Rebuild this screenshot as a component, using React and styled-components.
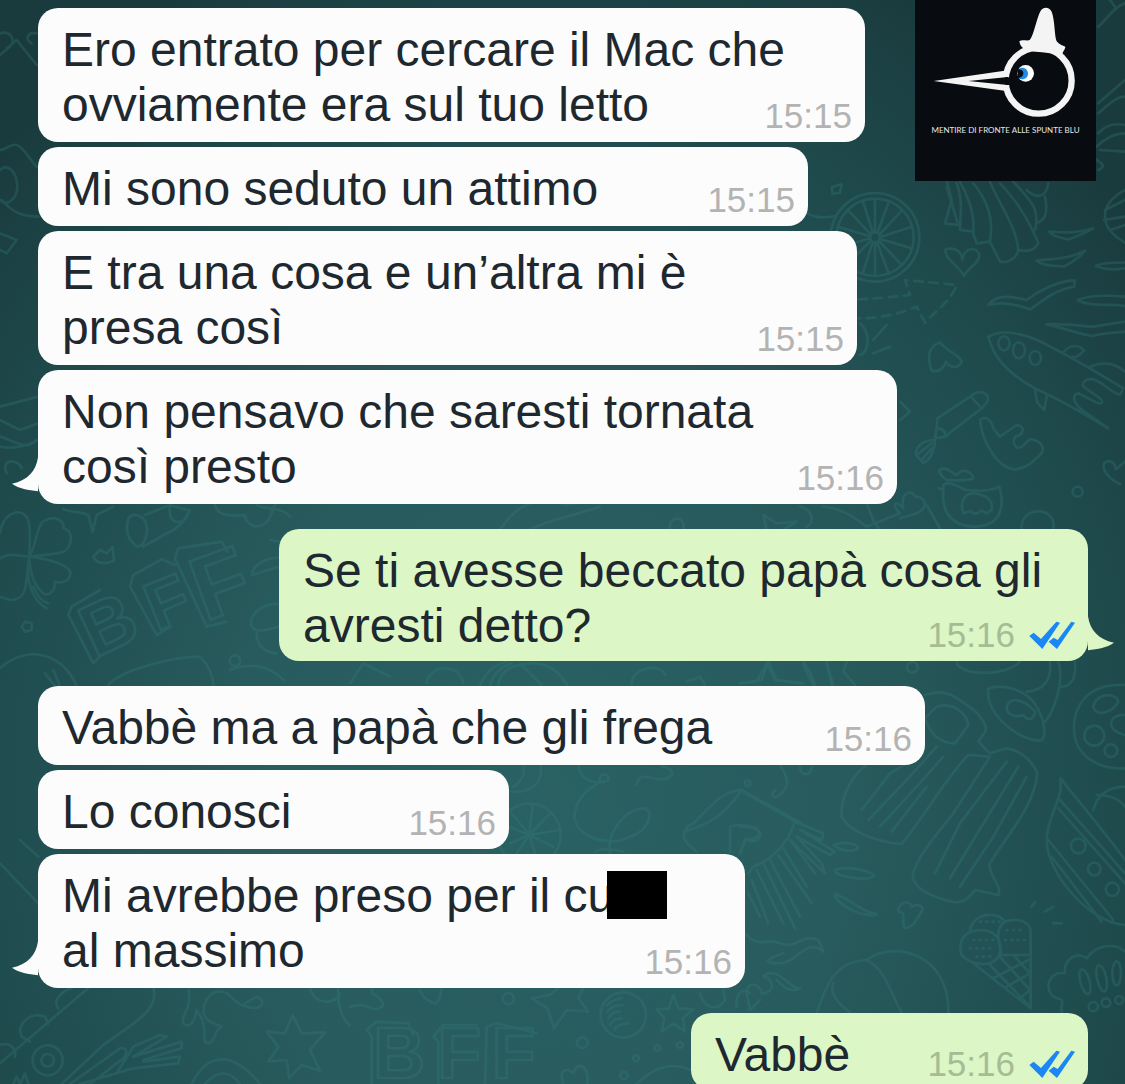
import styled, { createGlobalStyle, css } from 'styled-components'

const thread = [
    {
        id: 1,
        messages: [
            { lines: ['Ero entrato per cercare il Mac che', 'ovviamente era sul tuo letto'], time: '15:15', width: 827 },
            { lines: ['Mi sono seduto un attimo'], time: '15:15', width: 770 },
            { lines: ['E tra una cosa e un’altra mi è', 'presa così'], time: '15:15', width: 819 },
            { lines: ['Non pensavo che saresti tornata', 'così presto'], time: '15:16', width: 859, tail: true },
        ],
    },
    {
        id: 2,
        sent: true,
        messages: [
            { lines: ['Se ti avesse beccato papà cosa gli', 'avresti detto?'], time: '15:16', width: 809, tail: true },
        ],
    },
    {
        id: 3,
        messages: [
            { lines: ['Vabbè ma a papà che gli frega'], time: '15:16', width: 887 },
            { lines: ['Lo conosci'], time: '15:16', width: 471 },
            { lines: ['Mi avrebbe preso per il cu', 'al massimo'], censored: 0, time: '15:16', width: 707, tail: true },
        ],
    },
    {
        id: 4,
        sent: true,
        messages: [
            { lines: ['Vabbè'], time: '15:16', width: 397 },
        ],
    },
]

const Doodles = () => (
    <Wallpaper viewBox='0 0 1125 1084' preserveAspectRatio='xMinYMin slice' aria-hidden='true'>
        {/* wheel, wing, hearts, rocket */}
        <g transform='translate(800 180) scale(.3333)'>
            <circle cx='225' cy='172' r='133' />
            <circle cx='225' cy='172' r='116' />
            <circle cx='225' cy='172' r='15' />
            <path d='M225 154V60M233 156L266 66M240 162L305 92M243 170L335 140M243 178L335 205M240 186L305 255M232 190L266 280M225 192V286M217 190L188 280M210 184L145 250M207 176L114 202M207 168L114 140M210 160L145 92M218 156L188 62' />
            <path d='M22 100C50 115 75 115 105 108M95 22L125 12L120 38L98 42Z' />
            <path d='M440 0L455 60L435 130L475 135L440 20M470 10C490 60 480 110 480 150L520 155C525 100 500 40 480 5M520 10C570 70 580 130 570 185L530 190L518 155M570 185L600 245C625 250 650 235 655 210C650 140 590 60 570 5M600 10C660 70 700 150 715 190C700 215 680 215 655 210M640 5C700 70 720 90 705 150M680 30C710 60 740 50 745 10M735 50C745 100 735 120 710 130' />
            <path d='M492 288C480 260 430 235 437 208C465 200 485 215 487 238C495 200 530 200 538 225C540 250 500 265 492 288Z' />
            <path d='M395 572C380 530 385 500 420 487C440 515 475 520 486 545C475 568 450 565 438 545C430 565 418 578 395 572Z' />
            <path strokeDasharray='26 20' d='M175 358C240 355 280 350 330 345L315 300C370 305 420 310 470 315C455 360 400 400 375 428L350 380C290 405 230 415 175 415' />
            <path d='M748 155C780 155 810 165 880 145C850 160 825 175 800 178C780 170 760 172 748 155ZM710 242C760 235 800 240 855 212C840 232 810 250 792 260C760 255 730 260 710 242ZM888 258C910 245 940 250 975 247M888 258C920 272 950 268 975 265M565 375C590 340 640 350 680 360C720 330 780 300 825 302L822 320C760 330 720 370 690 388C640 370 600 365 565 375ZM975 350C920 345 870 345 833 360C870 382 930 370 975 378M740 433C800 430 850 440 880 440L975 425M740 433C800 445 840 465 880 468C920 455 950 460 975 455M975 30C900 70 890 140 975 188M975 60L915 90M975 110L912 120M975 135L930 150' />
            <path d='M565 470C620 440 700 470 760 505C840 545 910 590 970 625L960 645C930 635 905 605 880 598C860 595 845 605 850 620L900 655C912 665 905 675 890 668L835 640C815 645 820 665 840 685L925 745C850 700 760 650 710 628C620 580 580 530 565 470ZM790 518C810 490 840 495 852 512C840 525 825 535 820 530M870 560C920 540 950 555 975 575M705 630L712 668L733 690L740 650' />
            <ellipse cx='612' cy='490' rx='17' ry='21' /><ellipse cx='657' cy='511' rx='18' ry='24' /><ellipse cx='706' cy='534' rx='17' ry='21' />
            <path d='M410 745L412 715L525 640C550 630 570 645 562 665L545 685L435 770L405 775ZM512 650L545 685M410 745C430 745 440 758 435 770M405 780C370 780 345 800 348 825L370 850C395 835 405 805 405 780ZM350 825L395 790M365 840L400 800' />
            <path d='M540 720C555 705 575 720 580 745L600 770L650 735C680 740 670 765 645 770C635 795 650 810 665 800L690 778C720 780 735 800 725 820C700 845 680 865 645 868C590 865 545 780 540 720Z' />
            <path d='M418 870C440 855 460 885 470 885C490 860 520 880 520 895C500 905 460 900 440 900C425 890 418 880 418 870ZM415 925L430 930L430 915C450 900 480 925 500 930C540 935 570 935 598 920C615 980 605 1040 520 1040C440 1035 425 980 430 930M490 1000C480 970 490 940 520 940C560 945 580 960 575 990L560 1000L545 992L528 1002L510 994L490 1000' />
            <path d='M960 912C930 900 905 870 912 850C930 835 945 850 948 868L975 845' />
            <circle cx='833' cy='935' r='15' />
            <path d='M665 1045C660 980 770 975 760 1045M0 980C40 990 45 1030 20 1040M70 980C150 990 180 1030 200 1040L300 1000C270 970 290 960 310 985C300 930 340 930 345 950C380 950 385 985 350 1000L300 1015M300 665L330 695L300 720M180 430C215 460 205 520 180 525M220 480L260 435M220 520L270 500' />
        </g>
        {/* clover, candy, lettering */}
        <g transform='translate(0 440) scale(.3333)'>
            <path d='M88 350C90 280 100 210 45 218C20 225 5 245 0 280M88 350C110 320 110 240 140 240C165 225 195 245 190 265C225 275 215 325 190 335C160 345 120 345 88 350ZM88 350C60 350 30 335 0 355M88 350C75 420 90 480 30 480L0 470M88 350C140 355 210 375 212 400C205 430 180 430 165 425C165 455 145 470 130 460C105 440 90 400 88 350ZM88 350C75 420 95 480 140 505M100 440C115 470 120 480 145 490' />
            <path d='M190 208C220 220 250 215 265 225L278 275L290 225L340 200M385 235C400 215 435 225 440 260C445 290 430 320 410 320C385 300 375 270 385 235ZM435 225L510 195L570 212C550 250 530 270 500 280L430 320M510 195C505 240 520 250 550 245M645 195C650 225 690 230 735 225C740 270 800 270 812 225L825 195M280 350L300 330L320 340L338 320L342 362C310 375 290 370 280 350ZM65 560L75 545L95 550V570L75 575Z' />
            <circle cx='705' cy='662' r='16' />
            <path d='M0 685C80 610 190 640 230 738M135 700L165 738M160 690L180 738M325 735C360 690 520 650 600 650C630 680 640 710 640 738M755 405C760 375 790 355 838 352M755 405L838 380M838 492C780 490 745 530 755 560C770 580 800 570 838 560M770 580C770 620 800 640 830 640M812 300L838 305M0 20C50 30 100 10 110 0M20 100C0 50 60 60 65 85' />
            <g fontFamily='Liberation Sans, Arial, sans-serif' fontWeight='700'>
                <text transform='translate(285 655) rotate(-25)' fontSize='220'>B</text>
                <text transform='translate(470 575) rotate(-22)' fontSize='205'>F</text>
                <text transform='translate(615 545) rotate(-20)' fontSize='270'>F</text>
            </g>
            <path d='M215 500L205 525L280 670L300 650M215 500L300 450M400 405L390 440L470 585L512 560M400 405L485 358L525 375M535 325L525 355L620 560L680 545M535 325L665 305L682 335' />
        </g>
        {/* fries, popsicles, cake, ice cream */}
        <g transform='translate(740 640) scale(.3333)'>
            <path d='M0 130L50 125L80 70L105 120L185 130M190 65L210 95L225 135M260 65L275 135M320 65L310 95L345 135M650 65C655 110 800 110 840 65M745 145C790 130 850 150 880 185C920 240 920 300 900 302C830 300 735 220 745 145ZM800 200C810 170 850 175 885 215C880 245 860 240 850 225C820 235 800 220 800 200M860 155C920 150 935 110 930 65M955 65C975 120 940 220 915 245M1005 65C1010 120 990 140 965 140' />
            <circle cx='517' cy='82' r='16' />
            <path d='M1155 135C1040 130 995 200 1003 280C1010 350 1080 390 1155 385M1060 200C1065 160 1130 155 1135 185C1120 215 1070 235 1060 200ZM1155 225C1110 220 1090 270 1155 285' />
            <circle cx='1063' cy='287' r='30' /><circle cx='1113' cy='332' r='19' />
            <path d='M555 165C610 145 640 165 680 195C720 220 745 260 735 275L715 305L750 340L800 325C840 330 880 365 892 400C885 500 790 600 750 670C740 700 790 740 775 765L705 750C670 800 640 790 600 775C550 760 510 730 520 695C540 640 600 570 640 520L750 350L685 345C620 410 560 520 485 612C430 610 330 580 305 530C300 470 340 400 380 375M555 235L590 200C640 185 680 220 685 255L645 310C600 310 570 280 555 235ZM365 510L450 400L550 340M385 540L500 420L590 320M420 560L530 440L610 350M455 575L560 440M585 700L660 550L800 365M630 715L700 600L835 380M660 740L760 590L860 410' />
            <path d='M0 450L165 545M0 560C40 560 65 570 60 590C45 615 20 600 18 595L0 640M165 545C140 620 90 660 40 680L25 700M165 545L250 580L245 600L180 570M180 570L285 635L270 645L170 590M170 590L245 670L255 700L150 600M150 600L225 700M130 625L200 740M115 645L215 790M90 660L180 830M70 670L165 865M50 690L130 850M35 720L85 850M25 760L60 830M105 450C85 470 105 480 125 460C145 440 150 420 120 375M180 380C180 410 215 410 215 380' />
            <path d='M280 615C320 600 355 615 355 625C330 640 300 630 280 615ZM285 690C320 675 400 695 402 708C380 725 280 710 285 690ZM285 762C330 775 370 820 410 822C390 840 290 800 285 762ZM495 865C480 845 505 820 475 815C470 790 510 775 515 800C535 790 555 800 545 815C530 835 525 860 495 865Z' />
            <path d='M962 415C1020 490 1090 570 1155 660M962 450C950 500 920 550 920 600C920 700 1050 850 1155 855M960 480L1155 700M955 505L1155 730M925 600L1120 840M935 650L1085 845M962 415L962 450M1155 440C1100 440 1070 470 1060 510M1070 465C1110 465 1140 480 1155 500' />
            <circle cx='1015' cy='618' r='22' /><circle cx='1063' cy='687' r='19' /><circle cx='1117' cy='748' r='20' />
            <path d='M665 945C650 900 680 870 720 870C780 870 790 920 775 950C755 985 690 975 665 945ZM690 870C700 820 770 810 795 845C840 830 875 850 872 880L872 1105L700 970M795 845C760 870 780 920 785 945L865 945M780 950L870 1050M750 975L870 1100M820 945L870 1000M865 960L760 1015M870 1000L800 1040M870 1050L840 1075' />
            <path strokeDasharray='3 16' d='M700 900H760M690 925H765M710 950H760M800 870H855M795 900H860M720 845H780' />
            <path d='M230 1118C270 1000 300 965 380 960C460 900 630 940 625 1118M380 960C440 990 450 1060 485 1118M280 1030C265 1070 310 1100 330 1118M875 800L885 785M915 815L940 800M940 850H965M965 1118C960 1090 980 1080 950 1075C910 1060 920 990 975 1000C970 950 1020 935 1040 955C1070 910 1130 910 1155 935' />
            <ellipse cx='1035' cy='1025' rx='14' ry='38' transform='rotate(-15 1035 1025)' /><ellipse cx='1085' cy='1015' rx='14' ry='40' transform='rotate(-12 1085 1015)' /><ellipse cx='1130' cy='1000' rx='13' ry='36' />
            <circle cx='1060' cy='1100' r='14' /><circle cx='1098' cy='1088' r='13' /><circle cx='1138' cy='1080' r='12' />
            <path d='M15 880C60 930 80 890 120 910C170 930 180 880 235 900L250 935C200 890 170 970 120 970C70 970 70 960 130 940M20 1060C20 1020 60 1030 65 1060C110 1060 100 1010 70 1010C110 970 150 1050 180 1045C150 1060 130 1040 110 1020M20 1060L30 1110L60 1080' />
        </g>
        {/* skateboard, rocket, star */}
        <g transform='translate(0 840) scale(.3333)'>
            <path d='M265 444L0 670M175 505C155 480 190 450 215 445M65 590C50 555 80 530 110 525L135 530L145 552M65 590L90 605M0 615C30 605 50 625 45 650M185 732L310 615C400 550 480 510 460 444M210 732L360 625C380 620 385 640 370 655L270 732M350 700L400 620L480 585L500 590L400 650M400 650L545 605V625L430 660M430 665L540 650L535 670L400 685L240 732M40 732L50 710L60 732L75 700L85 732M565 450C580 500 540 530 550 550C570 570 585 540 590 510C630 560 600 600 620 610C650 610 640 570 665 560L630 545C590 520 620 460 650 455C700 450 690 490 740 500C790 515 800 480 770 470L735 490M575 732C610 660 680 610 780 732M615 732C650 690 690 690 720 732M930 444C940 490 1000 500 1020 460M1015 444C1010 500 1030 540 1050 555M0 70L115 190M60 0L115 50' />
            <circle cx='143' cy='661' r='45' /><circle cx='143' cy='661' r='19' />
            <path d='M878 525L905 580L975 577L930 630L960 692L905 675L868 715L860 660L805 665L835 620L800 575L855 580Z' />
        </g>
        {/* lettering, stars, moon */}
        <g transform='translate(350 760) scale(.3333)'>
            <path d='M0 740C60 720 70 770 100 735C90 700 60 710 65 684M210 690C220 720 250 730 258 730C275 715 270 700 275 684M545 715L600 705L625 684M545 715L592 745L612 805L650 750L715 755L685 715L700 684M970 705L985 745L1030 748L998 775L1005 815L970 790L935 815L943 775L920 748L957 745ZM1050 700C1060 740 1100 760 1125 720L1120 690M1160 740C1155 700 1180 680 1200 700M640 972C625 930 650 920 670 940C680 900 720 915 712 972M860 972C920 910 980 910 1020 930' />
            <circle cx='475' cy='716' r='17' /><circle cx='820' cy='765' r='68' /><circle cx='697' cy='848' r='16' /><circle cx='923' cy='864' r='9' /><circle cx='990' cy='855' r='9' /><circle cx='858' cy='895' r='9' /><circle cx='822' cy='947' r='11' />
            <path d='M815 715C790 720 780 725 772 735M820 735C790 735 780 745 772 755M810 755C790 755 780 765 775 775M815 775C795 775 785 785 780 795M835 790C810 790 795 800 795 810' />
            <g fontFamily='Liberation Sans, Arial, sans-serif' fontWeight='700' fontSize='215'>
                <text x='70' y='955'>B</text>
                <text x='262' y='955'>F</text>
                <text x='425' y='955'>F</text>
            </g>
            <path d='M50 810L80 785L175 790L190 825M50 810L65 830V972M250 830L280 795H380M250 830L265 845V972M410 800L440 790L560 820M410 800L405 972' />
        </g>
        {/* swirls, lime slice, envelope */}
        <g transform='translate(480 640) scale(.3333)'>
            <path d='M0 135C20 95 40 75 80 65M30 135C40 105 60 80 95 70M55 135C60 80 130 60 195 75C235 90 250 120 262 135M125 75L185 135M455 135C450 85 540 65 555 105M620 125L660 110L675 135M780 130L845 120L865 65L890 120L968 130M970 75L1000 135M1040 70L1060 135M95 455C150 460 190 430 182 378M100 440C130 420 135 400 130 378' />
            <circle cx='148' cy='585' r='94' />
            <path d='M148 585L158 495M148 585L210 520M148 585L240 570M148 585L220 620M148 585L165 640M148 585L110 640M148 585L90 610M148 585L88 560M148 585L95 520' />
            <path d='M295 378C300 420 350 440 385 420C390 395 355 400 360 420C355 440 290 450 283 530C290 600 400 620 450 590C500 580 530 510 490 505C430 510 380 580 390 640M470 435C480 390 510 420 550 418C590 410 580 385 545 378M650 635C600 600 600 570 640 550C690 500 730 450 785 450L965 550M615 575C690 550 730 530 785 450M750 560C790 550 840 560 838 580C830 600 800 600 795 600L780 640M750 560V635M345 635C370 620 410 630 430 635' />
            <circle cx='803' cy='430' r='8' />
        </g>
        {/* left and right margins */}
        <g transform='scale(.3333)'>
            <path d='M0 100C30 90 50 120 30 140L0 165M20 145L50 120L110 195M110 100C80 95 75 120 95 130M0 450C20 450 30 430 50 435C70 440 90 480 110 500M0 510C20 490 50 510 52 560C50 600 20 620 0 600M5 600C40 640 70 650 115 650M0 700L50 720L20 760L0 750M0 1260L60 1290L115 1270M0 1310C60 1330 80 1350 110 1320M0 1220L115 1190' />
            <path transform='translate(3000 0)' d='M375 10C340 20 320 60 295 80M330 0L345 20M295 310L375 240M295 340C330 310 350 290 375 290M295 400C320 370 350 370 375 375M290 440C320 410 350 400 375 400M290 480C320 500 310 500 295 510M300 450L375 455' />
            <path d='M770 1515C790 1530 850 1520 870 1550M1500 1590C1560 1500 1620 1490 1700 1515L1790 1500M1590 1590C1640 1560 1700 1555 1800 1520M2010 1590C2000 1550 2060 1540 2050 1590M2300 1590L2290 1545L2330 1570L2390 1565L2350 1590M2600 1510L2620 1560L2640 1590M2780 1515L2820 1585M690 2010C740 1990 800 1990 850 2040M1050 2050L1090 1990L1170 2030M1280 2050C1290 1990 1380 1990 1390 2050' />
        </g>
    </Wallpaper>
)

const Ticks = () => (
    <TicksIcon viewBox='388 92 138 84' role='img' aria-label='Letto'>
        <path d='M389 137L402 127L424 146L470 94L481 97L428 176Z' />
        <path d='M447 154L462 142L474 149L515 94L526 97L472 176Z' />
    </TicksIcon>
)

const Badge = () => (
    <BadgeBox>
        <svg viewBox='30 0 543 360' aria-hidden='true'>
            <circle cx='401' cy='242' r='99' fill='#080c10' stroke='#f4f4f4' strokeWidth='19' />
            <path d='M309 211L86 243L309 274Z' fill='#f4f4f4' />
            <path d='M309 231L190 243L309 255Z' fill='#080c10' />
            <path d='M300 232H320V255H302Z' fill='#080c10' />
            <path d='M343 124C352 117 366 124 374 120C387 106 394 55 407 32C415 20 433 20 440 35C450 60 448 108 455 124C462 134 473 137 481 140C480 150 472 155 473 163C465 162 455 166 448 162C424 158 398 156 372 153C365 145 347 150 343 124Z' fill='#f4f4f4' />
            <circle cx='362' cy='220' r='25' fill='#fff' />
            <path d='M339 208C351 198 368 204 369 220C370 236 352 244 339 233C350 229 351 214 339 208Z' fill='#1d8be6' />
            <path d='M337 208C350 207 357 214 355 222C353 231 347 233 339 234Z' fill='#080c10' />
        </svg>
        <figcaption>MENTIRE DI FRONTE ALLE SPUNTE BLU</figcaption>
    </BadgeBox>
)

const Message = ({ message, sent }) => {
    const last = message.lines.length - 1
    return (
        <Bubble $sent={sent} $width={message.width}>
            {message.lines.map((line, i) => (
                <Row key={line}>
                    <Line>
                        {line}
                        {message.censored === i && <Censor />}
                    </Line>
                    {i === last && (
                        <Meta $sent={sent}>
                            <time>{message.time}</time>
                            {sent && <Ticks />}
                        </Meta>
                    )}
                </Row>
            ))}
            {message.tail && (
                <Tail $sent={sent} viewBox='0 0 78 104' aria-hidden='true'>
                    <path d='M78 0C72 42 48 68 0 80C22 95 48 100 78 102Z' />
                </Tail>
            )}
        </Bubble>
    )
}

const App = () => {
    return (
        <Chat>
            <GlobalStyle />
            <Doodles />
            {thread.map(group => (
                <Group key={group.id} $sent={group.sent}>
                    {group.messages.map(message => (
                        <Message key={message.lines[0]} message={message} sent={group.sent} />
                    ))}
                </Group>
            ))}
            <Badge />
        </Chat>
    )
}

export default App

const GlobalStyle = createGlobalStyle`
*{
    box-sizing:border-box;
}

body{
    margin:0;
    font-family:'Liberation Sans', Arial, sans-serif;
}
`

const Chat = styled.main`
position:relative;
display:flex;
flex-direction:column;
gap:25px;
height:100vh;
padding:8px 37px 0 38px;
overflow:hidden;
background:radial-gradient(ellipse 68% 85% at 48% 74%, #2a6163 0%, #285b5d 40%, #1f4b4d 75%, #1a3b3e 100%);
`

const Wallpaper = styled.svg`
position:absolute;
inset:0;
width:100%;
height:100%;
fill:none;
stroke:#37807f;
stroke-width:8;
stroke-linecap:round;
stroke-linejoin:round;
opacity:0.28;
`

const Group = styled.section`
position:relative;
display:flex;
flex-direction:column;
flex-shrink:0;
gap:5px;
align-items:${({ $sent }) => ($sent ? 'flex-end' : 'flex-start')};
`

const Bubble = styled.article`
position:relative;
width:${({ $width }) => $width}px;
max-width:100%;
padding:${({ $sent }) => ($sent ? '14px 13px 8px 24px' : '14px 13px 10px 24px')};
border-radius:20px;
background:${({ $sent }) => ($sent ? '#dcf6c5' : '#fcfcfc')};
`

const Row = styled.div`
display:flex;
justify-content:space-between;
align-items:flex-end;
height:55px;
`

const Line = styled.p`
margin:0;
font-size:48px;
line-height:55px;
white-space:nowrap;
color:#20282f;
`

const Meta = styled.div`
display:flex;
align-items:center;
gap:14px;
padding-bottom:${({ $sent }) => ($sent ? '2px' : '0')};
font-size:35px;
line-height:32px;
color:${({ $sent }) => ($sent ? '#a5bc95' : '#b3b3b3')};
`

const TicksIcon = styled.svg`
width:46px;
height:28px;
fill:#1b87f5;
`

const Tail = styled.svg`
position:absolute;
right:100%;
bottom:12px;
width:26px;
height:35px;
fill:#fcfcfc;

${({ $sent }) => $sent && css`
right:auto;
left:100%;
bottom:10px;
fill:#dcf6c5;
transform:scaleX(-1);
`}
`

const Censor = styled.span`
display:inline-block;
width:60px;
height:48px;
margin-left:-7px;
vertical-align:-7px;
background:#000;
`

const BadgeBox = styled.figure`
position:absolute;
top:0;
right:29px;
width:181px;
height:181px;
margin:0;
background:#080c10;

svg{
    display:block;
    width:100%;
    height:120px;
}

figcaption{
    font-family:Lato, 'Liberation Sans', sans-serif;
    font-size:8px;
    line-height:20px;
    text-align:center;
    white-space:nowrap;
    color:#e6e6e6;
}
`
